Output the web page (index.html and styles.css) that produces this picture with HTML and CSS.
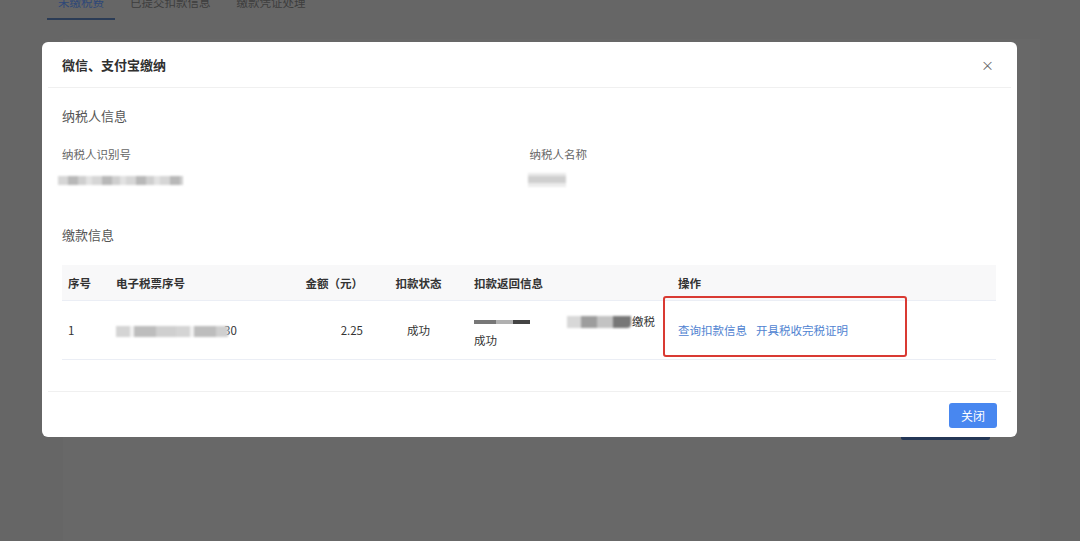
FILE: index.html
```html
<!DOCTYPE html>
<html lang="zh-CN">
<head>
<meta charset="utf-8">
<title>微信、支付宝缴纳</title>
<link rel="stylesheet" href="styles.css">
</head>
<body>
<div class="page">
  <div class="tabs">
    <span class="tab tab-active">未缴税费</span>
    <span class="tab">已提交扣款信息</span>
    <span class="tab">缴款凭证处理</span>
  </div>
  <div class="page-panel">
    <div class="page-actions"><span class="page-btn"></span></div>
  </div>
</div>

<div class="modal">
  <div class="modal-header">
    <span class="modal-title">微信、支付宝缴纳</span>
    <span class="modal-close">×</span>
  </div>
  <div class="modal-body">
    <div class="section-title">纳税人信息</div>
    <div class="info-grid">
      <div class="info-item">
        <div class="info-label">纳税人识别号</div>
        <div class="info-value"><span class="blur blur-id"></span></div>
      </div>
      <div class="info-item">
        <div class="info-label">纳税人名称</div>
        <div class="info-value"><span class="blur blur-name"></span></div>
      </div>
    </div>
    <div class="section-title section-pay">缴款信息</div>
    <table class="pay-table">
      <colgroup>
        <col class="c-no"><col class="c-ticket"><col class="c-amount"><col class="c-status"><col class="c-msg"><col class="c-op">
      </colgroup>
      <thead>
        <tr>
          <th>序号</th>
          <th>电子税票序号</th>
          <th class="t-right">金额（元）</th>
          <th class="t-center">扣款状态</th>
          <th>扣款返回信息</th>
          <th>操作</th>
        </tr>
      </thead>
      <tbody>
        <tr>
          <td>1</td>
          <td><span class="blur blur-ticket"></span><span class="ticket-tail">30</span></td>
          <td class="t-right">2.25</td>
          <td class="t-center">成功</td>
          <td class="msg-cell"><div class="msg-line"><span class="blur blur-msg1"></span><span class="blur blur-msg2"></span>缴税</div><div>成功</div></td>
          <td class="op-cell"><a class="link">查询扣款信息</a><a class="link">开具税收完税证明</a></td>
        </tr>
      </tbody>
    </table>
    <div class="highlight-box"></div>
  </div>
  <div class="modal-footer">
    <button class="btn-primary">关闭</button>
  </div>
</div>
</body>
</html>
```

FILE: styles.css
```css
html, body {
  margin: 0;
  padding: 0;
}
body {
  width: 1080px;
  height: 541px;
  overflow: hidden;
  background: #666666;
  font-family: "Noto Sans CJK SC", "Noto Sans", sans-serif;
  position: relative;
}
.page {
  padding: 0 0 0 47px;
}
.tabs {
  display: flex;
  margin-top: -7px;
  height: 27px;
}
.tab {
  font-size: 11.5px;
  color: #3d3d3d;
  padding: 0 11px;
  margin-right: 4px;
  height: 27px;
  line-height: 18px;
  white-space: nowrap;
  box-sizing: border-box;
}
.tab-active {
  color: #2e4878;
  border-bottom: 2px solid #2b3c56;
}
.page-panel {
  margin: 19px 40px 0 16px;
  height: 520px;
  background: #686868;
}
.page-actions {
  display: flex;
  justify-content: flex-end;
  padding: 387px 50px 0 0;
}
.page-btn {
  width: 89px;
  height: 14px;
  background: #243756;
  border-radius: 0 0 2px 2px;
}

.modal {
  position: absolute;
  left: 42px;
  top: 42px;
  width: 975px;
  height: 395px;
  background: #ffffff;
  border-radius: 6px;
}
.modal-header {
  height: 45px;
  margin: 0 6px 0 6px;
  padding: 0 17px 0 14px;
  border-bottom: 1px solid #f0f0f0;
  display: flex;
  align-items: center;
  justify-content: space-between;
}
.modal-title {
  font-size: 13px;
  font-weight: 700;
  color: #303030;
}
.modal-close {
  font-size: 13px;
  color: #666;
  line-height: 1;
}
.modal-body {
  position: relative;
  padding: 18px 14px 31px 14px;
  border-bottom: 1px solid #f0f0f0;
  margin: 0 6px;
}
.section-title {
  font-size: 13px;
  color: #555;
  line-height: 20px;
}
.info-grid {
  display: grid;
  grid-template-columns: 1fr 1fr;
  margin-top: 18px;
}
.info-label {
  font-size: 11.5px;
  color: #666;
  line-height: 20px;
}
.info-value {
  height: 20px;
  margin-top: 6px;
  display: flex;
  align-items: center;
}
.blur {
  display: inline-block;
  filter: blur(1.2px);
}
.blur-id {
  width: 125px;
  height: 9px;
  margin-left: -4px;
  background: repeating-linear-gradient(90deg, #d6d6d6 0 10px, #b8b8b8 10px 20px, #cfcfcf 20px 28px, #e2e2e2 28px 34px);
}
.blur-name {
  width: 38px;
  height: 14px;
  margin-left: -2px;
  background: linear-gradient(180deg, #e9e9e9 0 25%, #cfcfcf 25% 70%, #ececec 70%);
}
.section-pay {
  margin-top: 35px;
}
.pay-table {
  margin-top: 20px;
  width: 934px;
  border-collapse: collapse;
  table-layout: fixed;
  font-size: 11.5px;
  color: #333;
}
.c-no { width: 48px; }
.c-ticket { width: 179px; }
.c-amount { width: 80px; }
.c-status { width: 99px; }
.c-msg { width: 204px; }
.c-op { width: 324px; }
.pay-table th {
  background: #f8f8f9;
  height: 35px;
  font-weight: 700;
  text-align: left;
  padding: 0 6px;
  border-bottom: 1px solid #ebeef5;
  color: #333;
}
.pay-table td {
  height: 56px;
  padding: 0 6px;
  border-bottom: 1px solid #ebeef5;
  vertical-align: middle;
}
.t-right { text-align: right !important; }
.t-center { text-align: center !important; }
.blur-ticket {
  width: 112px;
  height: 11px;
  vertical-align: middle;
  background: repeating-linear-gradient(90deg, #d4d4d4 0 14px, #f2f2f2 14px 18px, #bdbdbd 18px 40px, #cfcfcf 40px 60px);
}
.ticket-tail {
  margin-left: -4px;
}
.msg-cell {
  line-height: 19px;
  padding-top: 2px !important;
}
.msg-line {
  white-space: nowrap;
  display: flex;
  align-items: center;
}
.blur-msg1 {
  width: 56px;
  height: 4px;
  background: linear-gradient(90deg, #777 0 40%, #b0b0b0 40% 70%, #444 70%);
  margin-right: 37px;
  filter: blur(0.6px);
}
.blur-msg2 {
  width: 64px;
  height: 12px;
  background: repeating-linear-gradient(90deg, #d8d8d8 0 14px, #9d9d9d 14px 30px, #c3c3c3 30px 46px, #777 46px 64px);
  margin-right: 1px;
  border-radius: 0 0 4px 0;
}
.op-cell {
  white-space: nowrap;
}
.link {
  color: #4f83d1;
  margin-right: 9px;
  cursor: pointer;
}
.highlight-box {
  position: absolute;
  left: 615px;
  top: 208px;
  width: 240px;
  height: 57px;
  border: 2.5px solid #d93a33;
  border-radius: 3px;
}
.modal-footer {
  display: flex;
  justify-content: flex-end;
  padding: 11px 20px 0 0;
}
.btn-primary {
  width: 48px;
  height: 25px;
  border: none;
  border-radius: 3px;
  background: #4887f0;
  color: #fff;
  font-family: "Noto Sans CJK SC", sans-serif;
  font-size: 12px;
  padding: 0;
}
```
